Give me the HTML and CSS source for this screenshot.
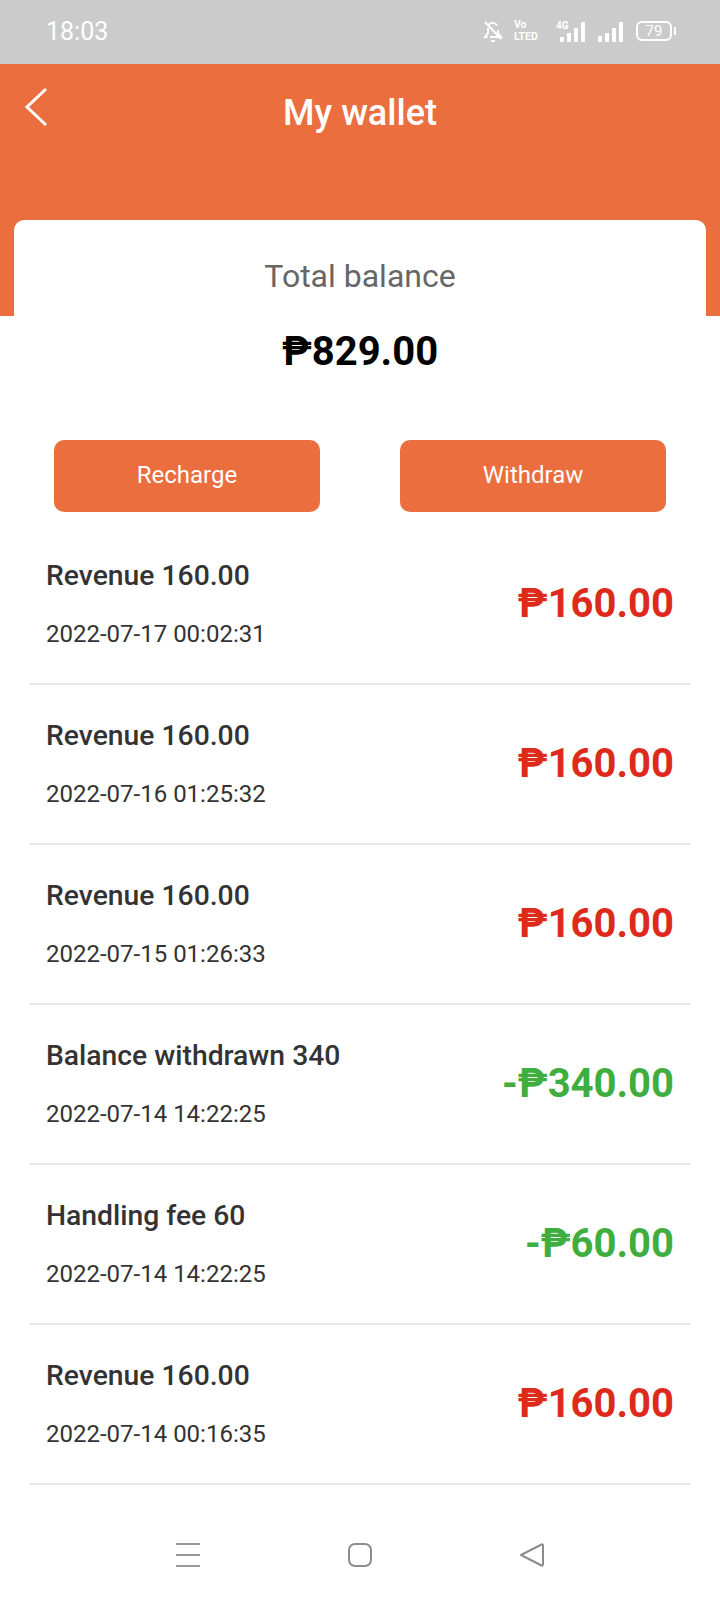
FILE: index.html
```html
<!DOCTYPE html>
<html lang="en">
<head>
    <meta charset="UTF-8">
    <meta name="viewport" content="width=device-width, initial-scale=1.0">
    <title>My wallet</title>
    <link rel="stylesheet" href="styles.css">
</head>
<body>
    <div class="status-bar">
        <span class="clock">18:03</span>
        <div class="status-icons">
            <svg class="ico-bell" width="20" height="24" viewBox="0 0 20 24" fill="none" stroke="#fff" stroke-width="2">
                <path d="M5.500 6a5 5 0 0 1 8.500 0.500M15 11v3l3 4H7M4.500 18H2l3-4V9"/>
                <path d="M2 3l16 17"/>
                <path d="M8 22h4"/>
            </svg>
            <div class="volte"><span>Vo</span><span>LTED</span></div>
            <div class="signal signal-4g">
                <span class="tag-4g">4G</span>
                <i class="bar b1"></i><i class="bar b2"></i><i class="bar b3"></i><i class="bar b4"></i>
            </div>
            <div class="signal signal-main">
                <i class="bar b1"></i><i class="bar b2"></i><i class="bar b3"></i><i class="bar b4"></i>
            </div>
            <div class="battery"><span class="battery-level">79</span><i class="battery-tip"></i></div>
        </div>
    </div>

    <header class="top">
        <svg class="back" width="24" height="40" viewBox="0 0 24 40" fill="none" stroke="#fff" stroke-width="3">
            <path d="M22 2L3 20l19 18"/>
        </svg>
        <h1>My wallet</h1>
    </header>

    <section class="card">
        <p class="card-label">Total balance</p>
        <p class="card-amount">₱829.00</p>
        <div class="actions">
            <button>Recharge</button>
            <button>Withdraw</button>
        </div>
    </section>

    <ul class="records">
        <li>
            <div class="rec-info"><p class="rec-name">Revenue 160.00</p><p class="rec-date">2022-07-17 00:02:31</p></div>
            <span class="rec-sum plus">₱160.00</span>
        </li>
        <li>
            <div class="rec-info"><p class="rec-name">Revenue 160.00</p><p class="rec-date">2022-07-16 01:25:32</p></div>
            <span class="rec-sum plus">₱160.00</span>
        </li>
        <li>
            <div class="rec-info"><p class="rec-name">Revenue 160.00</p><p class="rec-date">2022-07-15 01:26:33</p></div>
            <span class="rec-sum plus">₱160.00</span>
        </li>
        <li>
            <div class="rec-info"><p class="rec-name">Balance withdrawn 340</p><p class="rec-date">2022-07-14 14:22:25</p></div>
            <span class="rec-sum minus">-₱340.00</span>
        </li>
        <li>
            <div class="rec-info"><p class="rec-name">Handling fee 60</p><p class="rec-date">2022-07-14 14:22:25</p></div>
            <span class="rec-sum minus">-₱60.00</span>
        </li>
        <li>
            <div class="rec-info"><p class="rec-name">Revenue 160.00</p><p class="rec-date">2022-07-14 00:16:35</p></div>
            <span class="rec-sum plus">₱160.00</span>
        </li>
    </ul>

    <nav class="nav-bar">
        <svg width="26" height="26" viewBox="0 0 26 26" fill="none" stroke="#999" stroke-width="2">
            <path d="M1 2h24M1 13h24M1 24h24"/>
        </svg>
        <svg width="26" height="26" viewBox="0 0 26 26" fill="none" stroke="#8c8c8c" stroke-width="2">
            <rect x="2" y="2" width="22" height="22" rx="6"/>
        </svg>
        <svg width="26" height="26" viewBox="0 0 26 26" fill="none" stroke="#8c8c8c" stroke-width="2" stroke-linejoin="round">
            <path d="M2 13L22.500 2.500a1 1 0 0 1 1.500 1v19a1 1 0 0 1-1.500 1z"/>
        </svg>
    </nav>
</body>
</html>
```

FILE: styles.css
```css
* {
    box-sizing: border-box;
}
body {
    font-family: Roboto, "Liberation Sans", sans-serif;
    background-color: #fff;
    margin: 0;
    color: #333;
}
p, h1, ul {
    margin: 0;
    padding: 0;
}

/* phone status bar */
.status-bar {
    height: 64px;
    background: #cbcbcb;
    color: #fff;
    display: flex;
    justify-content: space-between;
    align-items: center;
    padding: 0 48px 2px 46px;
}
.clock {
    font-size: 25px;
}
.status-icons {
    display: flex;
    align-items: center;
}
.volte {
    width: 24px;
    margin-left: 11px;
    display: flex;
    flex-direction: column;
    font-size: 10.5px;
    font-weight: 700;
    line-height: 12px;
}
.signal {
    display: flex;
    align-items: flex-end;
    gap: 3px;
    height: 22px;
    width: 26px;
}
.signal-4g {
    width: 29px;
    margin-left: 18px;
    justify-content: flex-end;
    position: relative;
}
.signal-main {
    margin-left: 13px;
}
.tag-4g {
    position: absolute;
    left: 0;
    top: 1px;
    font-size: 10px;
    font-weight: 700;
    line-height: 10px;
}
.bar {
    width: 4px;
    background: #fff;
}
.b1 { height: 6px; }
.b2 { height: 9px; }
.b3 { height: 14px; }
.b4 { height: 20px; }
.signal-4g .b1 { height: 5px; }
.battery {
    width: 36px;
    height: 20px;
    margin-left: 12px;
    border: 2px solid #fff;
    border-radius: 6px;
    display: flex;
    justify-content: center;
    align-items: center;
    position: relative;
}
.battery-level {
    font-size: 15px;
}
.battery-tip {
    position: absolute;
    right: -6px;
    top: 4px;
    width: 2px;
    height: 8px;
    background: #fff;
}

/* orange title area */
.top {
    height: 252px;
    background: #eb6e3e;
    position: relative;
    padding-top: 29px;
}
.back {
    position: absolute;
    left: 24px;
    top: 23px;
}
.top h1 {
    color: #fff;
    font-size: 36px;
    font-weight: 500;
    line-height: 40px;
    text-align: center;
}

/* balance card */
.card {
    background: #fff;
    margin: -96px 14px 0;
    border-radius: 10px 10px 0 0;
    padding-top: 37px;
    text-align: center;
    position: relative;
}
.card-label {
    font-size: 32px;
    line-height: 38px;
    color: #666;
}
.card-amount {
    font-size: 40px;
    font-weight: 700;
    line-height: 48px;
    color: #000;
    margin-top: 33px;
}
.actions {
    display: flex;
    justify-content: space-between;
    padding: 0 40px;
    margin-top: 64px;
}
.actions button {
    width: 266px;
    height: 72px;
    padding: 0 0 3px;
    background: #eb6e3e;
    color: #fff;
    border: none;
    border-radius: 10px;
    font-family: inherit;
    font-size: 24px;
}

/* transaction rows */
.records {
    list-style: none;
    margin: 13px 30px 0;
}
.records li {
    height: 160px;
    border-bottom: 2px solid #e8e8e8;
    display: flex;
    justify-content: space-between;
    align-items: center;
    padding: 0 16px 2px;
}
.rec-info {
    padding-top: 2px;
}
.rec-name {
    font-size: 28.3px;
    font-weight: 500;
    line-height: 34px;
}
.rec-date {
    font-size: 24px;
    line-height: 30px;
    margin-top: 26px;
}
.rec-sum {
    font-size: 40px;
    font-weight: 700;
}
.plus {
    color: #dd2a1b;
}
.minus {
    color: #3fae3f;
}

/* phone navigation keys */
.nav-bar {
    display: flex;
    justify-content: space-between;
    padding: 57px 175px 0;
}
```
